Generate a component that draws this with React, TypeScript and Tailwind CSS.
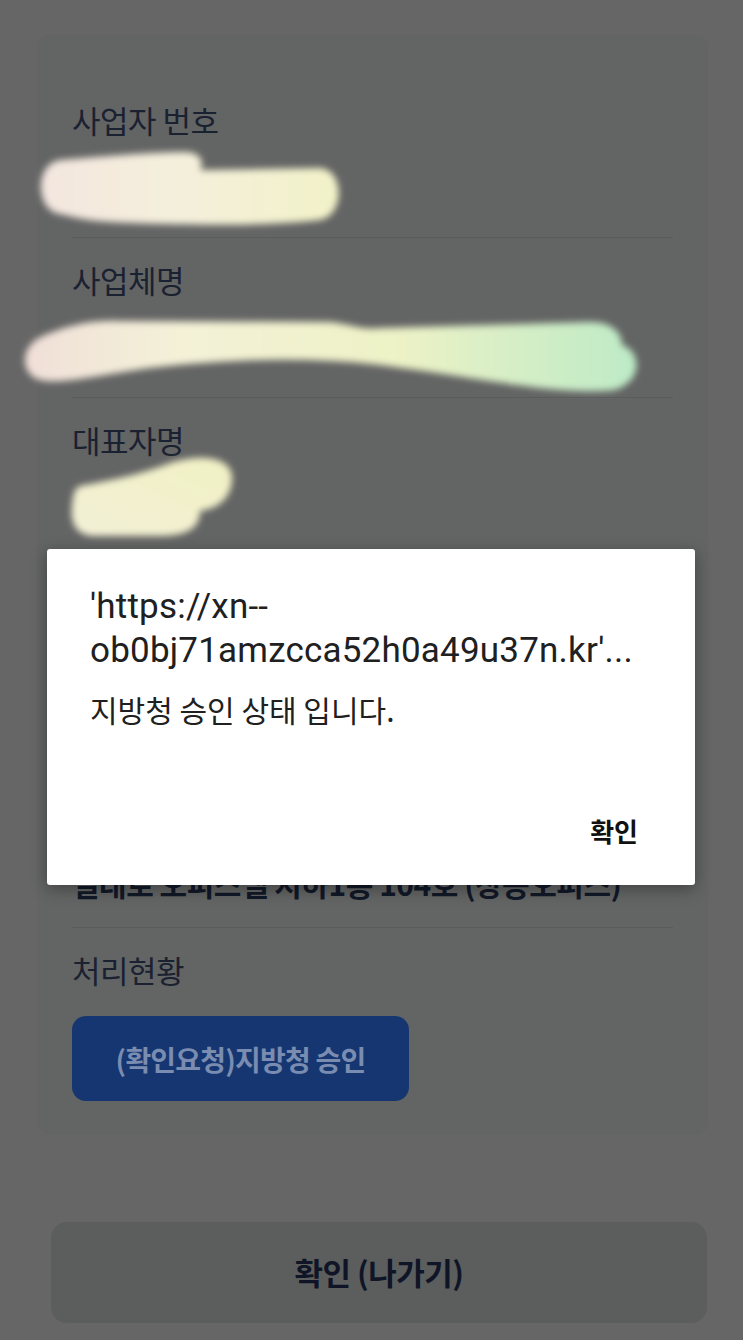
import React from "react";

const kr = "font-['Noto_Sans_CJK_KR','Noto_Sans',sans-serif]";

// blurred masks that hide the personal values
function Blob1() {
  return (
    <svg className="absolute left-[-40px] top-[-28px]" width="320" height="90" viewBox="32 145 320 90">
      <defs>
        <filter id="b1" x="-20%" y="-50%" width="140%" height="200%">
          <feGaussianBlur stdDeviation="3.5" />
        </filter>
        <linearGradient id="g1" x1="0" x2="1" y1="0" y2="0">
          <stop offset="0%" stopColor="#f3e6df" />
          <stop offset="45%" stopColor="#f4efdc" />
          <stop offset="100%" stopColor="#f2f2c8" />
        </linearGradient>
      </defs>
      <g filter="url(#b1)" fill="url(#g1)">
        <path d="M60 160 C 110 156, 150 152, 185 152 C 200 152, 205 162, 200 170 L 320 168 C 345 170, 345 215, 320 220 C 270 226, 200 226, 110 222 C 80 220, 70 216, 60 214 C 35 210, 34 164, 60 160 Z" />
      </g>
    </svg>
  );
}

function Blob2() {
  return (
    <svg className="absolute left-[-56px] top-[-21px]" width="640" height="90" viewBox="16 312 640 90">
      <defs>
        <filter id="b2" x="-10%" y="-50%" width="120%" height="200%">
          <feGaussianBlur stdDeviation="3.5" />
        </filter>
        <linearGradient id="g2" x1="0" x2="1" y1="0" y2="0">
          <stop offset="0%" stopColor="#f0dfd8" />
          <stop offset="25%" stopColor="#f4f1d8" />
          <stop offset="60%" stopColor="#eef2c6" />
          <stop offset="100%" stopColor="#bdeac6" />
        </linearGradient>
      </defs>
      <path
        filter="url(#b2)"
        fill="url(#g2)"
        d="M45 335 C 70 325, 90 320, 120 321 L 330 322 C 350 324, 360 330, 380 328 L 590 322 C 615 322, 622 335, 622 345 C 640 350, 645 380, 615 390 C 560 396, 480 378, 380 365 C 300 356, 220 360, 150 368 C 100 375, 60 385, 40 380 C 20 375, 18 345, 45 335 Z"
      />
    </svg>
  );
}

function Blob3() {
  return (
    <svg className="absolute left-[-10px] top-[-47px]" width="185" height="100" viewBox="62 445 185 100">
      <defs>
        <filter id="b3" x="-20%" y="-30%" width="140%" height="160%">
          <feGaussianBlur stdDeviation="3.5" />
        </filter>
        <linearGradient id="g3" x1="0" x2="1" y1="1" y2="0">
          <stop offset="0%" stopColor="#f3f0d6" />
          <stop offset="100%" stopColor="#f1f1c4" />
        </linearGradient>
      </defs>
      <path
        filter="url(#b3)"
        fill="url(#g3)"
        d="M80 485 C 120 478, 150 470, 170 462 C 200 452, 235 455, 232 480 C 230 500, 215 508, 200 510 C 200 525, 190 535, 160 535 L 95 535 C 75 535, 70 520, 72 505 C 73 492, 75 487, 80 485 Z"
      />
    </svg>
  );
}

function Field({ label, children, last }: { label: string; children: React.ReactNode; last?: boolean }) {
  return (
    <div className={last ? "pt-[20px]" : "pt-[20px] pb-[20px] border-b border-[#5a5b5b]"}>
      <div className="text-[31px] leading-[44px] tracking-[-0.5px] text-[#1a2131]">{label}</div>
      {children}
    </div>
  );
}

export default function App() {
  return (
    <div className={`relative h-[1340px] w-full overflow-hidden bg-[#666666] pt-[35px] ${kr}`}>
      {/* page card (dimmed under the alert) */}
      <div className="ml-[37px] w-[671px] rounded-[14px] bg-[#636464] px-[35px] pt-[43px] pb-[34px]">
        <Field label="사업자 번호">
          <div className="relative mt-[31px] h-[44px]">
            <Blob1 />
          </div>
        </Field>
        <Field label="사업체명">
          <div className="relative mt-[31px] h-[44px]">
            <Blob2 />
          </div>
        </Field>
        <Field label="대표자명">
          <div className="relative mt-[31px] h-[44px]">
            <Blob3 />
          </div>
        </Field>
        <Field label="업태 / 종목">
          <div className="mt-[31px] text-[29px] font-bold leading-[44px] text-[#1a2131]">서비스 / 기타</div>
        </Field>
        <Field label="사업장 주소">
          <div className="mt-[29px] whitespace-nowrap text-[30px] font-bold leading-[48px] tracking-[-0.5px] text-[#111827]">
            <div>서울특별시 강남구 테헤란로 123</div>
            <div>일대로 오피스텔 지하1층 104호 (상동오피스)</div>
          </div>
        </Field>
        <Field label="처리현황" last>
          <div className="mt-[24px] flex h-[85px] w-[337px] items-center justify-center rounded-[14px] bg-[#153671] text-[28px] font-bold tracking-[-0.8px] text-[#7a8cb0]">
            (확인요청)지방청 승인
          </div>
        </Field>
      </div>

      <div className="mt-[87px] ml-[51px] flex h-[101px] w-[656px] items-center justify-center rounded-[16px] bg-[#5c5d5d] text-[31px] font-bold tracking-[-0.5px] text-[#0f1526]">
        확인 (나가기)
      </div>

      {/* alert dialog */}
      <div className="absolute left-[47px] top-[549px] flex h-[336px] w-[648px] flex-col rounded-[3px] bg-white pl-[43px] pr-[57px] pt-[36px] pb-[38px] shadow-[0_4px_16px_rgba(0,0,0,0.35)]">
        <div className="font-['Roboto','Noto_Sans_CJK_KR',sans-serif] text-[35px] leading-[44px] tracking-[0.2px] text-[#202020]">
          <div>'https://xn--</div>
          <div>ob0bj71amzcca52h0a49u37n.kr'...</div>
        </div>
        <div className="mt-[17px] text-[30px] leading-[38px] text-[#202020]">지방청 승인 상태 입니다.</div>
        <div className="mt-auto flex justify-end">
          <div className="text-[26px] font-bold leading-[32px] text-[#111111]">확인</div>
        </div>
      </div>
    </div>
  );
}
